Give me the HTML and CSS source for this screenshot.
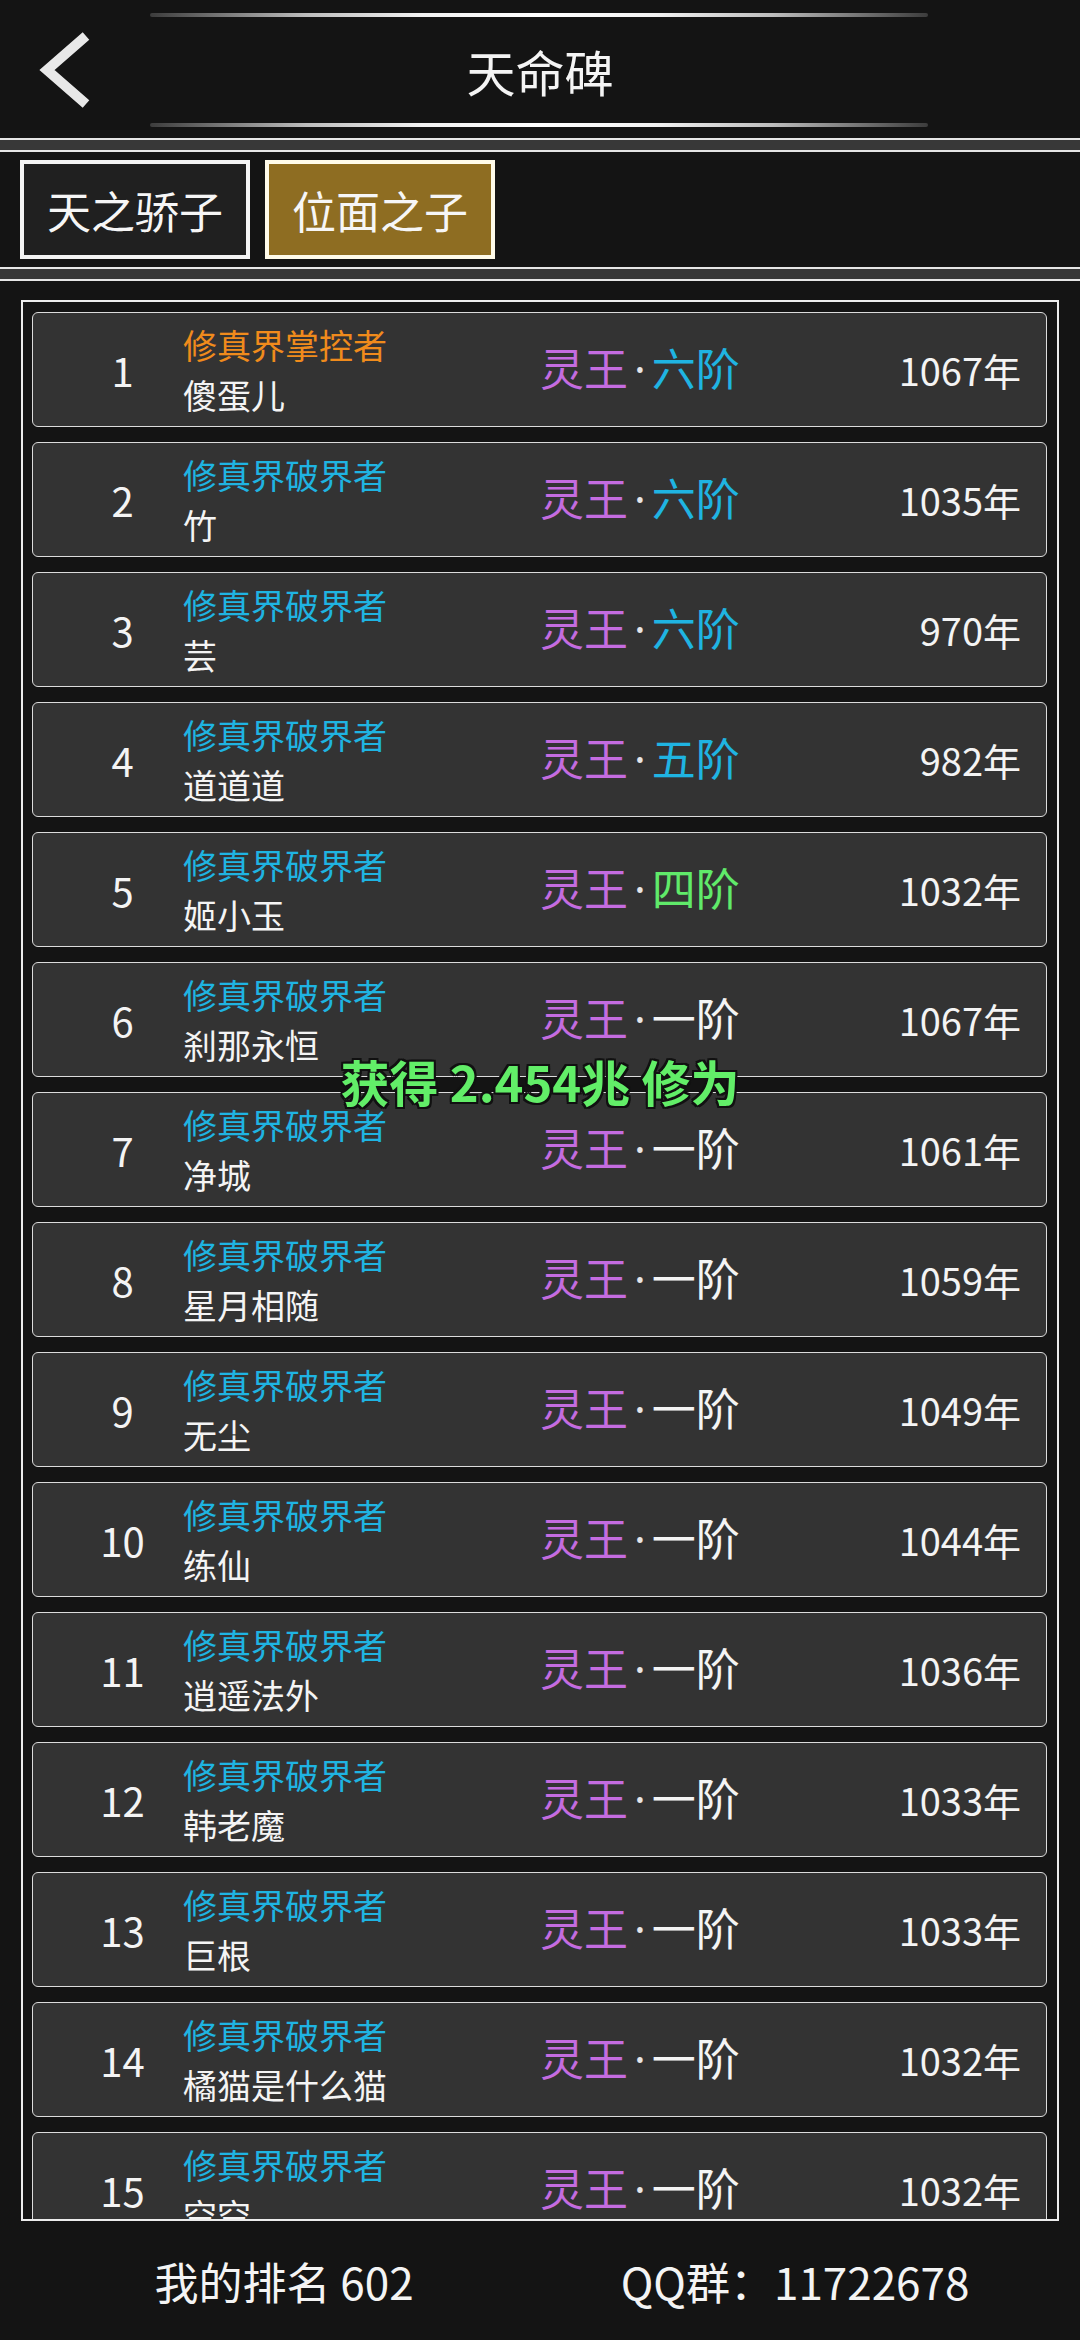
FILE: index.html
```html
<!DOCTYPE html>
<html lang="zh">
<head>
<meta charset="utf-8">
<title>天命碑</title>
<link rel="stylesheet" href="styles.css">
</head>
<body>
<div class="page">
  <header class="header">
    <div class="deco-line"></div>
    <div class="title-row">
      <div class="back">
        <svg width="60" height="80" viewBox="0 0 60 80"><polyline points="48,6 9,40 48,74" fill="none" stroke="#e8e8e8" stroke-width="10" stroke-linejoin="miter"/></svg>
      </div>
      <h1 class="title">天命碑</h1>
      <div></div>
    </div>
    <div class="deco-line"></div>
  </header>
  <div class="band"></div>
  <nav class="tabs">
    <div class="tab">天之骄子</div>
    <div class="tab tab-active">位面之子</div>
  </nav>
  <div class="band"></div>
  <main class="list-wrap">
    <div class="list">
      <div class="row"><div class="rank">1</div><div class="who"><div class="rank-title orange">修真界掌控者</div><div class="name">傻蛋儿</div></div><div class="realm"><span class="purple">灵王</span><span class="dot">·</span><span class="cyan">六阶</span></div><div class="years">1067年</div></div>
      <div class="row"><div class="rank">2</div><div class="who"><div class="rank-title cyan">修真界破界者</div><div class="name">竹</div></div><div class="realm"><span class="purple">灵王</span><span class="dot">·</span><span class="cyan">六阶</span></div><div class="years">1035年</div></div>
      <div class="row"><div class="rank">3</div><div class="who"><div class="rank-title cyan">修真界破界者</div><div class="name">芸</div></div><div class="realm"><span class="purple">灵王</span><span class="dot">·</span><span class="cyan">六阶</span></div><div class="years">970年</div></div>
      <div class="row"><div class="rank">4</div><div class="who"><div class="rank-title cyan">修真界破界者</div><div class="name">道道道</div></div><div class="realm"><span class="purple">灵王</span><span class="dot">·</span><span class="cyan">五阶</span></div><div class="years">982年</div></div>
      <div class="row"><div class="rank">5</div><div class="who"><div class="rank-title cyan">修真界破界者</div><div class="name">姬小玉</div></div><div class="realm"><span class="purple">灵王</span><span class="dot">·</span><span class="green">四阶</span></div><div class="years">1032年</div></div>
      <div class="row"><div class="rank">6</div><div class="who"><div class="rank-title cyan">修真界破界者</div><div class="name">刹那永恒</div></div><div class="realm"><span class="purple">灵王</span><span class="dot">·</span><span class="white">一阶</span></div><div class="years">1067年</div></div>
      <div class="row"><div class="rank">7</div><div class="who"><div class="rank-title cyan">修真界破界者</div><div class="name">净城</div></div><div class="realm"><span class="purple">灵王</span><span class="dot">·</span><span class="white">一阶</span></div><div class="years">1061年</div></div>
      <div class="row"><div class="rank">8</div><div class="who"><div class="rank-title cyan">修真界破界者</div><div class="name">星月相随</div></div><div class="realm"><span class="purple">灵王</span><span class="dot">·</span><span class="white">一阶</span></div><div class="years">1059年</div></div>
      <div class="row"><div class="rank">9</div><div class="who"><div class="rank-title cyan">修真界破界者</div><div class="name">无尘</div></div><div class="realm"><span class="purple">灵王</span><span class="dot">·</span><span class="white">一阶</span></div><div class="years">1049年</div></div>
      <div class="row"><div class="rank">10</div><div class="who"><div class="rank-title cyan">修真界破界者</div><div class="name">练仙</div></div><div class="realm"><span class="purple">灵王</span><span class="dot">·</span><span class="white">一阶</span></div><div class="years">1044年</div></div>
      <div class="row"><div class="rank">11</div><div class="who"><div class="rank-title cyan">修真界破界者</div><div class="name">逍遥法外</div></div><div class="realm"><span class="purple">灵王</span><span class="dot">·</span><span class="white">一阶</span></div><div class="years">1036年</div></div>
      <div class="row"><div class="rank">12</div><div class="who"><div class="rank-title cyan">修真界破界者</div><div class="name">韩老魔</div></div><div class="realm"><span class="purple">灵王</span><span class="dot">·</span><span class="white">一阶</span></div><div class="years">1033年</div></div>
      <div class="row"><div class="rank">13</div><div class="who"><div class="rank-title cyan">修真界破界者</div><div class="name">巨根</div></div><div class="realm"><span class="purple">灵王</span><span class="dot">·</span><span class="white">一阶</span></div><div class="years">1033年</div></div>
      <div class="row"><div class="rank">14</div><div class="who"><div class="rank-title cyan">修真界破界者</div><div class="name">橘猫是什么猫</div></div><div class="realm"><span class="purple">灵王</span><span class="dot">·</span><span class="white">一阶</span></div><div class="years">1032年</div></div>
      <div class="row"><div class="rank">15</div><div class="who"><div class="rank-title cyan">修真界破界者</div><div class="name">空空</div></div><div class="realm"><span class="purple">灵王</span><span class="dot">·</span><span class="white">一阶</span></div><div class="years">1032年</div></div>
    </div>
    <div class="toast">获得 2.454兆 修为</div>
  </main>
  <footer class="footer">
    <div class="foot-item">我的排名 602</div>
    <div class="foot-item">QQ群：11722678</div>
  </footer>
</div>
</body>
</html>
```

FILE: styles.css
```css
* { box-sizing: border-box; margin: 0; padding: 0; }
html, body { width: 1080px; height: 2340px; overflow: hidden; }
body {
  background: #141414;
  color: #ffffff;
  font-family: "Noto Sans CJK SC", "Noto Sans", sans-serif;
}
.page {
  display: flex;
  flex-direction: column;
  height: 2340px;
}
.header {
  flex: none;
  height: 138px;
  padding-top: 13px;
  display: flex;
  flex-direction: column;
}
.deco-line {
  flex: none;
  width: 778px;
  height: 4px;
  margin-left: 150px;
  border-radius: 2px;
  background: linear-gradient(90deg, #3c3c3c 0%, #bdbdbd 20%, #f2f2f2 35%, #ffffff 50%, #f2f2f2 65%, #bdbdbd 80%, #3c3c3c 100%);
}
.title-row {
  flex: none;
  height: 106px;
  display: grid;
  grid-template-columns: 150px 1fr 150px;
  align-items: center;
}
.back {
  padding-left: 38px;
  display: flex;
  align-items: center;
  height: 80px;
}
.title {
  text-align: center;
  font-size: 49px;
  font-weight: 400;
  color: #f4f4f4;
  line-height: 1;
}
.band {
  flex: none;
  height: 14px;
  background: #383838;
  border-top: 2px solid #e6e6e6;
  border-bottom: 2px solid #e6e6e6;
}
.tabs {
  flex: none;
  display: flex;
  gap: 15px;
  padding: 8px 20px 0 20px;
  height: 115px;
}
.tab {
  width: 230px;
  height: 99px;
  border: 4px solid #f4f4f4;
  background: #202020;
  display: flex;
  align-items: center;
  justify-content: center;
  font-size: 44px;
  color: #f6f6f6;
}
.tab-active {
  background: #8e6d22;
  border-color: #fffbea;
}
.list-wrap {
  position: relative;
  flex: 1;
  min-height: 0;
  padding: 19px 21px 0 21px;
  display: flex;
  flex-direction: column;
}
.list {
  flex: 1;
  min-height: 0;
  border: 2px solid #ececec;
  padding: 10px 10px 0 9px;
  overflow: hidden;
  display: flex;
  flex-direction: column;
  gap: 15px;
}
.row {
  flex: none;
  height: 115px;
  background: #333333;
  border: 1px solid #dcdcdc;
  border-radius: 6px;
  display: grid;
  grid-template-columns: 119px 358px 1fr auto;
  align-items: center;
  padding-left: 30px;
  padding-right: 25px;
}
.rank {
  text-align: center;
  font-size: 40px;
  color: #f4f4f4;
}
.who {
  padding-left: 1px;
  font-size: 34px;
  line-height: 50px;
}
.rank-title { white-space: nowrap; }
.name { color: #f4f4f4; white-space: nowrap; }
.realm {
  font-size: 44px;
  line-height: 60px;
  margin-top: -4px;
  white-space: nowrap;
}
.dot {
  font-family: "Noto Sans", sans-serif;
  color: #e6e6e6;
  margin: 0 6px;
}
.years {
  font-size: 38px;
  color: #f4f4f4;
  text-align: right;
}
.orange { color: #f08b1c; }
.cyan { color: #1fb4e2; }
.purple { color: #c46ce0; }
.green { color: #60ea6a; }
.white { color: #f4f4f4; }
.toast {
  position: absolute;
  left: 0;
  right: 0;
  top: 770px;
  text-align: center;
  font-size: 49px;
  font-weight: 700;
  color: #62ee68;
  line-height: 60px;
  text-shadow: -2px -2px 0 #111, 2px -2px 0 #111, -2px 2px 0 #111, 2px 2px 0 #111, 0 2px 0 #111, 0 -2px 0 #111, 2px 0 0 #111, -2px 0 0 #111;
}
.footer {
  flex: none;
  height: 119px;
  display: grid;
  grid-template-columns: 568px 454px;
  align-items: center;
}
.foot-item {
  text-align: center;
  font-size: 44px;
  color: #f4f4f4;
}
```
